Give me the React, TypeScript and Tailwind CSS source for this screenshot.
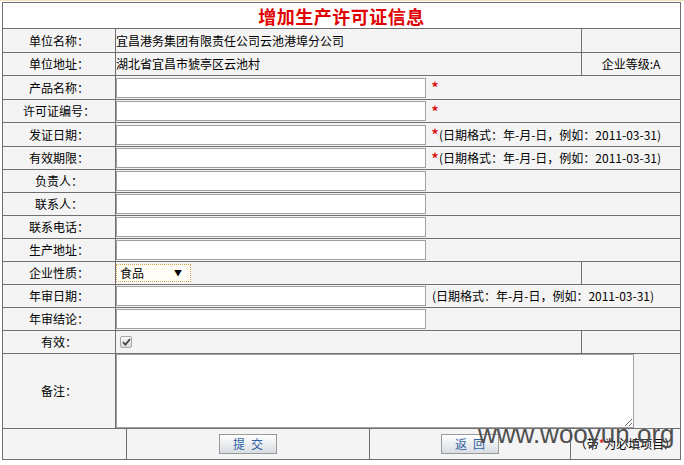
const cell = 'border border-[#707070] p-0 bg-[#f4f4f4] align-middle'
const labelCell = cell + ' text-center'

function TextBox() {
  return <input type="text" className="h-[20px] w-[310px] border border-[#a0a0a0] bg-white align-middle outline-none" />
}

function Star() {
  return <span className="ml-[5px] text-[17px] leading-none text-[#e00000] align-middle">*</span>
}

function Hint() {
  return <span className="align-middle">(日期格式：年-月-日，例如：2011-03-31)</span>
}

function InputRow({ label, h, star, hint }: { label: string; h: string; star?: boolean; hint?: boolean }) {
  return (
    <tr>
      <td className={labelCell + ' ' + h}>{label}</td>
      <td className={cell} colSpan={5}>
        <TextBox />
        {star ? <Star /> : null}
        {hint ? <span className={star ? '' : 'ml-[6px]'}><Hint /></span> : null}
      </td>
    </tr>
  )
}

export default function App() {
  return (
    <div className="relative h-[465px] w-[684px] bg-white font-['Noto_Sans_CJK_SC',sans-serif] text-[12px] leading-[16px] text-black">
      <div className="h-px bg-[#f1e2bc]" />
      <table className="mt-px ml-[2px] w-[678px] table-fixed border-collapse">
        <colgroup>
          <col className="w-[113px]" />
          <col className="w-[11px]" />
          <col className="w-[243px]" />
          <col className="w-[201px]" />
          <col className="w-[11px]" />
          <col className="w-[99px]" />
        </colgroup>
        <tbody>
          <tr>
            <td colSpan={6} className="h-[26px] border border-[#707070] bg-white p-0 text-center align-middle text-[18px] leading-none font-bold tracking-[0.5px] text-[#e00000]">
              增加生产许可证信息
            </td>
          </tr>
          <tr>
            <td className={labelCell + ' h-[24px]'}>单位名称：</td>
            <td className={cell} colSpan={4}>宜昌港务集团有限责任公司云池港埠分公司</td>
            <td className={cell}></td>
          </tr>
          <tr>
            <td className={labelCell + ' h-[23px]'}>单位地址：</td>
            <td className={cell} colSpan={4}>湖北省宜昌市猇亭区云池村</td>
            <td className={labelCell}>企业等级:A</td>
          </tr>
          <InputRow label="产品名称：" h="h-[24px]" star />
          <InputRow label="许可证编号：" h="h-[23px]" star />
          <InputRow label="发证日期：" h="h-[24px]" star hint />
          <InputRow label="有效期限：" h="h-[23px]" star hint />
          <InputRow label="负责人：" h="h-[23px]" />
          <InputRow label="联系人：" h="h-[23px]" />
          <InputRow label="联系电话：" h="h-[23px]" />
          <InputRow label="生产地址：" h="h-[23px]" />
          <tr>
            <td className={labelCell + ' h-[23px]'}>企业性质：</td>
            <td className={cell} colSpan={4}>
              <div className="flex h-[18px] w-[75px] items-center justify-between border border-dotted border-[#d9a24a] bg-[#fffef6] pl-[3px] pr-[8px]">
                <span>食品</span>
                <span className="text-[8px]">▼</span>
              </div>
            </td>
            <td className={cell}></td>
          </tr>
          <InputRow label="年审日期：" h="h-[23px]" hint />
          <InputRow label="年审结论：" h="h-[23px]" />
          <tr>
            <td className={labelCell + ' h-[23px]'}>有效：</td>
            <td className={cell} colSpan={4}>
              <div className="ml-[4px] flex h-[12px] w-[12px] items-center justify-center rounded-[2px] border border-[#a8a8a8] bg-gradient-to-b from-[#f8f8f8] to-[#dcdcdc]">
                <svg width="9" height="8" viewBox="0 0 9 8">
                  <path d="M1 4.2 L3.4 6.6 L8 1.2" fill="none" stroke="#4a4a4a" strokeWidth="1.8" />
                </svg>
              </div>
            </td>
            <td className={cell}></td>
          </tr>
          <tr>
            <td className={labelCell + ' h-[75px]'}>备注：</td>
            <td className={cell} colSpan={5}>
              <textarea className="block h-[74px] w-[518px] border border-[#a0a0a0] bg-white outline-none" />
            </td>
          </tr>
          <tr>
            <td className={cell + ' h-[31px]'} colSpan={2}></td>
            <td className={cell + ' text-center'}>
              <button className="inline-flex h-[20px] w-[58px] items-center justify-center gap-[6px] border border-[#9a9a9a] bg-gradient-to-b from-[#ffffff] to-[#d8dde3] text-[#2f62a0] align-middle">
                <span>提</span>
                <span>交</span>
              </button>
            </td>
            <td className={cell + ' text-center'}>
              <button className="inline-flex h-[20px] w-[58px] items-center justify-center gap-[6px] border border-[#9a9a9a] bg-gradient-to-b from-[#ffffff] to-[#d8dde3] text-[#2f62a0] align-middle">
                <span>返</span>
                <span>回</span>
              </button>
            </td>
            <td className={cell + ' text-center'} colSpan={2}>
              （带<span className="text-[#e00000]">*</span>为必填项目）
            </td>
          </tr>
        </tbody>
      </table>
      <div className="absolute left-[478px] top-[421px] font-['Liberation_Sans',sans-serif] text-[26px] leading-none text-[#4e4e4e]">
        www.wooyun.org
      </div>
    </div>
  )
}
